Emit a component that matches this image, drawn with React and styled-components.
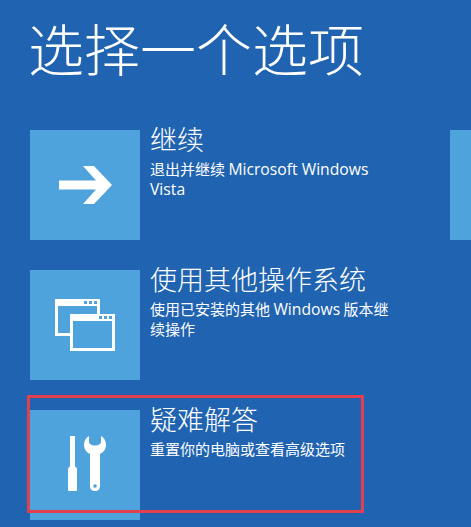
import React from "react";
import styled, { createGlobalStyle } from "styled-components";

const GlobalStyle = createGlobalStyle`
  html, body {
    margin: 0;
    padding: 0;
    background: #2063b0;
  }
`;

const Page = styled.div`
  width: 471px;
  height: 527px;
  overflow: hidden;
  box-sizing: border-box;
  padding: 11px 0 0 30px;
  background: #2063b0;
  color: #fff;
  font-family: "Noto Sans CJK SC", "Open Sans", sans-serif;
`;

const Title = styled.h1`
  margin: 0 0 0 -2px;
  height: 119px;
  font-size: 56px;
  line-height: 72px;
  font-weight: 300;
  white-space: nowrap;
`;

const Grid = styled.div`
  display: grid;
  grid-template-columns: 390px 110px;
  grid-auto-rows: 110px;
  column-gap: 30px;
  row-gap: 30px;
`;

const Option = styled.div`
  position: relative;
  display: flex;
  gap: 10px;
`;

const Tile = styled.div`
  flex: 0 0 110px;
  height: 110px;
  display: flex;
  align-items: center;
  justify-content: center;
  background: #4fa3dd;
`;

const Body = styled.div`
  width: 245px;
  margin-top: -10px;
`;

const Name = styled.div`
  font-size: 27px;
  line-height: 38px;
  font-weight: 300;
  white-space: nowrap;
`;

const Desc = styled.div`
  font-size: 15px;
  line-height: 20px;
  margin-top: 1px;
  white-space: nowrap;
`;

const Latin = styled.span`
  font-family: "Open Sans", sans-serif;
  font-size: 15.7px;
`;

const Highlight = styled.div`
  position: absolute;
  left: -3px;
  top: -15px;
  width: 337px;
  height: 118px;
  box-sizing: border-box;
  border: 3px solid #e2404e;
`;

const ArrowIcon = () => (
  <svg width="53" height="38" viewBox="0 0 53 38" fill="#fff">
    <path d="M0 14.500h37L24 0h11l18 19-18 19H24l13-14.500H0z" />
  </svg>
);

const WindowsIcon = () => (
  <svg width="60" height="52" viewBox="0 0 60 52">
    <path fill="#fff" d="M0 0h45v15h-3V7H3v27h12v3H0z" />
    <path fill="#fff" fillRule="evenodd" d="M15 15h45v37H15zM18 22v27h39V22z" />
    <g fill="#4fa3dd">
      <rect x="29" y="2" width="3" height="3" />
      <rect x="34" y="2" width="3" height="3" />
      <rect x="39" y="2" width="3" height="3" />
      <rect x="44" y="17" width="3" height="3" />
      <rect x="49" y="17" width="3" height="3" />
      <rect x="54" y="17" width="3" height="3" />
    </g>
  </svg>
);

const ToolsIcon = () => (
  <svg width="42" height="58" viewBox="0 0 42 58" fill="#fff">
    <path d="M6 0h5v30c0 1 2 1.500 2 3v20.500c0 1-.5 1.500-1.500 1.500h-6c-1 0-1.500-.5-1.500-1.500V33c0-1.500 2-2 2-3z" />
    <path d="M25 0c-3 1.500-5 5-5 9 0 4 2.500 7.500 6 9v32c0 3 2 5 5 5s5-2 5-5V18c3.500-1.500 6-5 6-9 0-4-2-7.500-5-9v6c0 2-3 3.500-6 3.500S25 8 25 6z" />
    <circle cx="31" cy="50" r="1.800" fill="#4fa3dd" />
  </svg>
);

const App = () => (
  <Page>
    <GlobalStyle />
    <Title>选择一个选项</Title>
    <Grid>
      <Option>
        <Tile>
          <ArrowIcon />
        </Tile>
        <Body>
          <Name>继续</Name>
          <Desc>
            退出并继续 <Latin>Microsoft Windows</Latin>
            <br />
            <Latin>Vista</Latin>
          </Desc>
        </Body>
      </Option>
      <Tile />
      <Option>
        <Tile>
          <WindowsIcon />
        </Tile>
        <Body>
          <Name>使用其他操作系统</Name>
          <Desc>
            使用已安装的其他 <Latin>Windows</Latin> 版本继
            <br />
            续操作
          </Desc>
        </Body>
      </Option>
      <div />
      <Option>
        <Tile>
          <ToolsIcon />
        </Tile>
        <Body>
          <Name>疑难解答</Name>
          <Desc>重置你的电脑或查看高级选项</Desc>
        </Body>
        <Highlight />
      </Option>
    </Grid>
  </Page>
);

export default App;
